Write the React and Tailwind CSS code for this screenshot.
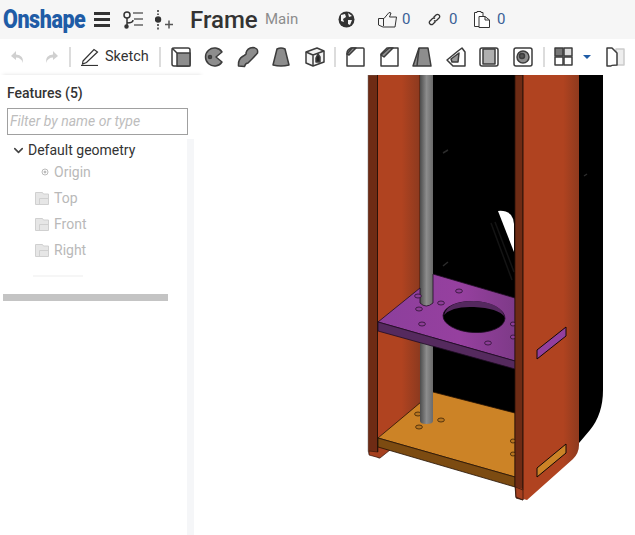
import { ChevronDown } from "lucide-react";

const font = { fontFamily: 'Roboto, "Noto Sans", sans-serif' };

function Counter({ value, className = "" }) {
    return <span className={`text-[15px] text-[#3a5f96] ${className}`}>{value}</span>;
}

// toolbar button, all tools sit on the same pitch
function Tool({ children, className = "w-[33.5px]" }) {
    return (
        <div className={`flex h-[24px] shrink-0 items-center justify-center ${className}`}>
            <svg width="22" height="22" viewBox="0 0 22 22" fill="none" stroke="#3c3c3c" strokeWidth="1.5" strokeLinejoin="round">
                {children}
            </svg>
        </div>
    );
}

function Divider() {
    return <div className="h-[20px] w-[2px] shrink-0 bg-[#dcdcdc]" />;
}

function PlaneIcon() {
    return (
        <svg width="14" height="13" viewBox="0 0 14 13" fill="#e6e6e6" stroke="#d0d0d0">
            <path d="M.5 .5h7l1 1.500h5v10.500H.5z" />
            <path d="M4.500 6.500h9M4.500 6.500v6" fill="none" />
        </svg>
    );
}

function TreeRow({ label, children }) {
    return (
        <div className="flex h-[26px] items-center">
            <div className="flex w-[54px] shrink-0 justify-end pr-[5px]">{children}</div>
            <span className="text-[14px] text-[#b9b9b9]">{label}</span>
        </div>
    );
}

function Model() {
    return (
        <svg className="h-[460px] w-[437px]" viewBox="198 75 437 460">
            <defs>
                <linearGradient id="rod" x1="0" x2="1" y1="0" y2="0">
                    <stop offset="0" stopColor="#4c4c4c" />
                    <stop offset="0.5" stopColor="#8c8c8c" />
                    <stop offset="1" stopColor="#6a6a6a" />
                </linearGradient>
                <linearGradient id="leftFace" x1="0" x2="1" y1="0" y2="0">
                    <stop offset="0" stopColor="#b04320" />
                    <stop offset="0.55" stopColor="#b04320" />
                    <stop offset="1" stopColor="#8a391f" />
                </linearGradient>
                <linearGradient id="rightFace" x1="0" x2="1" y1="0" y2="0">
                    <stop offset="0" stopColor="#b04320" />
                    <stop offset="0.75" stopColor="#b04320" />
                    <stop offset="1" stopColor="#8e3a1e" />
                </linearGradient>
                <linearGradient id="purpleTop" x1="0" x2="1" y1="0" y2="0">
                    <stop offset="0" stopColor="#8c3f9c" />
                    <stop offset="0.6" stopColor="#96409f" />
                    <stop offset="1" stopColor="#7e3a88" />
                </linearGradient>
            </defs>

            {/* back shell */}
            <path d="M433 75H603V390Q603 414 590 430L579 443V75Z" fill="#000" />
            <rect x="433" y="75" width="82" height="370" fill="#000" />

            {/* left panel */}
            <path d="M368 75H378V458L380 458L369 454L368 451Z" fill="#6e2b14" stroke="#777" strokeWidth="0.5" />
            <path d="M378 75H421V405L378 438Z" fill="url(#leftFace)" />
            <path d="M378 446L390 450L380 458L369 455V451L378 452Z" fill="#a5401f" stroke="#3a1608" strokeWidth="0.7" />
            <path d="M377.500 75V452" stroke="#2b1208" strokeWidth="1" />
            <path d="M420 75V290" stroke="#2b1208" strokeWidth="0.8" />

            {/* bottom plate */}
            <path d="M378 438L433 392L515 413V477Z" fill="#cc8326" stroke="#241204" strokeWidth="0.8" />
            <path d="M378 438L515 477V487L378 447Z" fill="#7c4b11" stroke="#241204" strokeWidth="0.8" />
            <g fill="#b87620" stroke="#3a2208" strokeWidth="0.8">
                <ellipse cx="418" cy="414" rx="3.400" ry="2" />
                <ellipse cx="419" cy="427" rx="3.400" ry="2" />
                <ellipse cx="441" cy="420" rx="3.400" ry="2" />
                <ellipse cx="513" cy="441" rx="2.600" ry="2" />
                <ellipse cx="513" cy="454" rx="2.600" ry="2" />
            </g>

            {/* rod */}
            <path d="M420 340H433V421Q433 424 426.500 424Q420 424 420 421Z" fill="url(#rod)" />
            <path d="M420 75H433V303Q433 306 426.500 306Q420 306 420 303Z" fill="url(#rod)" />

            {/* middle plate */}
            <path d="M378 322L420 288V303Q426 309 433 303V274L515 298V361Z" fill="url(#purpleTop)" stroke="#1f0c24" strokeWidth="0.8" />
            <path d="M378 322L515 361V369L378 331Z" fill="#552a5e" stroke="#1f0c24" strokeWidth="0.8" />
            <ellipse cx="474" cy="317" rx="31" ry="15.500" transform="rotate(3 474 317)" fill="#000" stroke="#1f0c24" strokeWidth="0.8" />
            <path d="M444 315Q448 301 474 301Q500 302 505 317Q498 308 474 307Q452 306 444 315Z" fill="#55285f" />
            <g fill="#8e3d98" stroke="#2a1230" strokeWidth="0.8">
                <ellipse cx="418" cy="296" rx="3.400" ry="2" />
                <ellipse cx="419" cy="309" rx="3.400" ry="2" />
                <ellipse cx="441" cy="303" rx="3.400" ry="2" />
                <ellipse cx="459" cy="291" rx="3.400" ry="2" />
                <ellipse cx="422" cy="324" rx="3.400" ry="2" />
                <ellipse cx="488" cy="343" rx="3.400" ry="2" />
                <ellipse cx="513" cy="324" rx="2.600" ry="2" />
                <ellipse cx="513" cy="337" rx="2.600" ry="2" />
            </g>

            {/* reflection and specks */}
            <path d="M491 223L512 280M495 222L514 272" stroke="#141414" strokeWidth="1.500" />
            <path d="M498 211Q506 210 511 215Q514 219 514 224V252Z" fill="#fff" />
            <path d="M443 153L448 150M443 266L448 262M584 176L587 174" stroke="#2b2b2b" strokeWidth="1.500" />

            {/* right panel */}
            <path d="M515 75H523V500L516 498L515 486Z" fill="#6e2b14" stroke="#2b1208" strokeWidth="0.8" />
            <path d="M523 75H579V445Q579 453 573 459L527 500L516 497V487L523 489Z" fill="url(#rightFace)" />
            <path d="M523 75V490" stroke="#2b1208" strokeWidth="1" />
            <path d="M515.500 487L523 490V500L516 497Z" fill="#a5401f" stroke="#2b1208" strokeWidth="0.7" />
            <path d="M537 350L566 327V336L537 359Z" fill="#933f9d" stroke="#120806" strokeWidth="1" />
            <path d="M537 468L566 444V453L537 477Z" fill="#cc8326" stroke="#120806" strokeWidth="1" />
        </svg>
    );
}

export default function App() {
    return (
        <div className="flex h-[535px] w-[635px] flex-col overflow-hidden bg-white text-[#333]" style={font}>

            {/* Top bar */}
            <header className="flex h-[39px] shrink-0 items-center bg-[#f6f6f6] pl-[3px]">
                <div className="w-[91px] shrink-0">
                    <span className="block origin-left scale-x-[0.86] text-[25px] font-black leading-none tracking-[-0.5px] text-[#1f5ca6]">
                        Onshape
                    </span>
                </div>
                <div className="flex w-[16px] shrink-0 flex-col gap-[3px]">
                    <div className="h-[3px] bg-[#333]" />
                    <div className="h-[3px] bg-[#333]" />
                    <div className="h-[3px] bg-[#333]" />
                </div>
                <svg className="ml-[12px] shrink-0" width="21" height="20" viewBox="0 0 21 20" fill="none" stroke="#333" strokeWidth="1.500">
                    <circle cx="5" cy="5" r="3" />
                    <circle cx="4.500" cy="16.500" r="1.500" fill="#333" />
                    <path d="M5 8V15M5 13Q11 13 11 10" />
                    <path d="M11 3H21M12 9H21M12 15H21" stroke="#666" />
                </svg>
                <svg className="ml-[12px] shrink-0" width="18" height="20" viewBox="0 0 18 20" fill="none" stroke="#333" strokeWidth="1.500">
                    <path d="M3 0V5M3 14V20" strokeDasharray="2 1.500" />
                    <circle cx="3" cy="9.500" r="2.500" fill="#333" />
                    <path d="M10 14.500H18M14 10.500V18.500" stroke="#555" />
                </svg>
                <span className="ml-[17px] w-[75px] shrink-0 text-[24px] font-medium leading-none">Frame</span>
                <span className="w-[73px] shrink-0 text-[15px] leading-none text-[#8c8c8c]">Main</span>
                <svg className="shrink-0" width="17" height="17" viewBox="0 0 17 17">
                    <circle cx="8.500" cy="8.500" r="8" fill="#333" />
                    <path d="M3 4L7 3L8 6L5 8L6 11L3 10ZM10 2L14 5L11 6ZM10 9L14 9L12 14L10 13Z" fill="#f6f6f6" />
                </svg>
                <svg className="ml-[23px] shrink-0" width="19" height="17" viewBox="0 0 19 17" fill="none" stroke="#333">
                    <path d="M.5 7.500H6L11 1.500L13 2L11.500 6H18.500L17 16H5L.5 14Z" />
                    <path d="M5.500 8V15" />
                </svg>
                <Counter value="0" className="ml-[5px] w-[18px] shrink-0" />
                <svg className="ml-[8px] shrink-0" width="13" height="13" viewBox="0 0 13 13" fill="none" stroke="#333" strokeWidth="1.300">
                    <path d="M5.500 4.500L8 2Q9.500 .7 11 2T11 5L8.500 7.500Q7 8.500 6 7.500" />
                    <path d="M7.500 8.500L5 11Q3.500 12.300 2 11T2 8L4.500 5.500Q6 4.500 7 5.500" />
                </svg>
                <Counter value="0" className="ml-[8px] w-[25px] shrink-0" />
                <svg className="shrink-0" width="16" height="17" viewBox="0 0 16 17" fill="#fff" stroke="#333">
                    <path d="M.5 1.500H3V.5H7V1.500H9V15.500H.5Z" />
                    <path d="M5 5.500H11L15.500 9V16.500H5Z" />
                    <path d="M11 5.500V9H15.500" fill="none" />
                </svg>
                <Counter value="0" className="ml-[7px]" />
            </header>

            {/* Tool bar */}
            <div className="flex h-[36px] shrink-0 items-center">
                <div className="flex w-[69px] shrink-0 justify-around px-[2px]">
                    <svg width="16" height="14" viewBox="0 0 16 14" fill="#d0d0d0"><path d="M6 1L1 6L6 10V7.500Q11 7.500 13 13Q14 5 6 4.500Z" /></svg>
                    <svg width="16" height="14" viewBox="0 0 16 14" fill="#d0d0d0"><path d="M10 1L15 6L10 10V7.500Q5 7.500 3 13Q2 5 10 4.500Z" /></svg>
                </div>
                <Divider />
                <svg className="ml-[10px] shrink-0" width="18" height="18" viewBox="0 0 18 18" fill="none" stroke="#333" strokeWidth="1.200">
                    <path d="M2 13L13 1.500L16.500 4L5.500 14.500L1.500 16Z" />
                    <path d="M0 17.500H17" />
                </svg>
                <span className="ml-[6px] w-[54px] shrink-0 text-[14.5px]">Sketch</span>
                <Divider />
                <div className="ml-[3px] flex">
                    <Tool>
                        <rect x="2" y="2" width="18" height="18" rx="2" fill="#fff" />
                        <rect x="7" y="7" width="13" height="13" fill="#8d8d8d" />
                        <path d="M2 2L7 7" />
                    </Tool>
                    <Tool>
                        <path d="M19 6A9 9 0 1 0 19 16L13 11Z" fill="#8d8d8d" />
                        <circle cx="7" cy="11" r="1.500" fill="#555" />
                    </Tool>
                    <Tool>
                        <path d="M1.500 20Q1 13 5.500 10.500T9 7Q10 2 16 1.500Q21.500 2 20.500 7Q18 10 15.500 12.500T11 17Q8.500 17 7.500 20.500Z" fill="#8d8d8d" />
                    </Tool>
                    <Tool>
                        <path d="M7 3Q11 1 15 3L19 19Q11 21 3 19Z" fill="#8d8d8d" />
                    </Tool>
                    <Tool>
                        <path d="M2 6L13 2L20 5V16L9 20L2 17Z" fill="#f3f3f3" />
                        <path d="M9 9L20 5M9 9V20M9 9L2 6" />
                        <path d="M12 12L14 8L16 11V16H12Z" fill="#222" />
                    </Tool>
                </div>
                <div className="ml-[2px]"><Divider /></div>
                <div className="ml-[3px] flex">
                    <Tool>
                        <path d="M7 2H19Q20 2 20 3V20H3V7Q3 4 7 2Z" fill="#fff" />
                        <path d="M3 8L8 2H12L5 9Z" fill="#8d8d8d" />
                    </Tool>
                    <Tool>
                        <path d="M9 2H20V20H3V8Z" fill="#fff" />
                        <path d="M3 9L11 2H15L6 11Z" fill="#8d8d8d" />
                    </Tool>
                    <Tool>
                        <path d="M8 2H17L20 20H2Z" fill="#8d8d8d" />
                        <path d="M8 2L6 20" />
                    </Tool>
                    <Tool>
                        <path d="M2 14L13 5L17 2L20 6V20H8Z" fill="#fff" />
                        <path d="M6 13L14 7L13 16H7Z" fill="#9a9a9a" />
                    </Tool>
                    <Tool>
                        <rect x="2" y="2" width="18" height="18" rx="2" fill="#fff" />
                        <rect x="5" y="3" width="12" height="15" fill="#b0b0b0" />
                    </Tool>
                    <Tool>
                        <rect x="2" y="2" width="18" height="18" rx="2" fill="#fff" />
                        <circle cx="11" cy="11" r="6" fill="#8d8d8d" />
                        <circle cx="10" cy="10" r="2.500" fill="#555" />
                    </Tool>
                </div>
                <div className="ml-[3px]"><Divider /></div>
                <Tool className="ml-[6px] w-[27px]">
                    <rect x="2" y="2" width="8" height="8" fill="#777" />
                    <rect x="11" y="2" width="8" height="8" fill="#ddd" />
                    <rect x="2" y="11" width="8" height="8" fill="#fff" />
                    <rect x="11" y="11" width="8" height="8" fill="#fff" />
                </Tool>
                <div className="ml-[5px] h-0 w-0 shrink-0 border-x-[4px] border-t-[4px] border-x-transparent border-t-[#1f5ca6]" />
                <Tool className="ml-[9px] w-[30px]">
                    <path d="M12 3H20V19H12Z" fill="#eee" stroke="#ccc" />
                    <path d="M3 2H8L13 7V19Q7 19 7 20H3Z" fill="#fff" />
                </Tool>
            </div>

            <div className="flex min-h-0 flex-1">
                {/* Feature list */}
                <aside className="flex w-[198px] shrink-0 flex-col shadow-[3px_0_4px_rgba(0,0,0,0.13)]">
                    <h2 className="px-[7px] pt-[9px] text-[14px] font-medium leading-[18px]">Features (5)</h2>
                    <div className="ml-[7px] mt-[6px] flex h-[27px] w-[181px] items-center border border-[#a0a0a0] px-[2px] text-[14px] italic text-[#bdbdbd]">
                        Filter by name or type
                    </div>
                    <div className="mt-[4px] flex min-h-0 flex-1">
                        <div className="w-[187px] shrink-0 pt-[2px]">
                            <div className="flex h-[18px] items-center pl-[11px]">
                                <ChevronDown size={15} strokeWidth={2.5} color="#444" />
                                <span className="ml-[2px] text-[14px]">Default geometry</span>
                            </div>
                            <TreeRow label="Origin">
                                <svg width="8" height="8" viewBox="0 0 8 8" fill="none" stroke="#bbb">
                                    <circle cx="4" cy="4" r="3" />
                                    <circle cx="4" cy="4" r="1" fill="#aaa" />
                                </svg>
                            </TreeRow>
                            <TreeRow label="Top"><PlaneIcon /></TreeRow>
                            <TreeRow label="Front"><PlaneIcon /></TreeRow>
                            <TreeRow label="Right"><PlaneIcon /></TreeRow>
                            <div className="ml-[33px] mt-[12px] h-[2px] w-[50px] bg-[#f6f6f6]" />
                            <div className="ml-[3px] mt-[17px] h-[7px] w-[165px] bg-[#c4c4c4]" />
                        </div>
                        <div className="w-[7px] shrink-0 bg-[#f5f6f8]" />
                    </div>
                </aside>

                {/* Graphics area */}
                <main className="min-w-0 flex-1 overflow-hidden bg-white">
                    <Model />
                </main>
            </div>
        </div>
    );
}
